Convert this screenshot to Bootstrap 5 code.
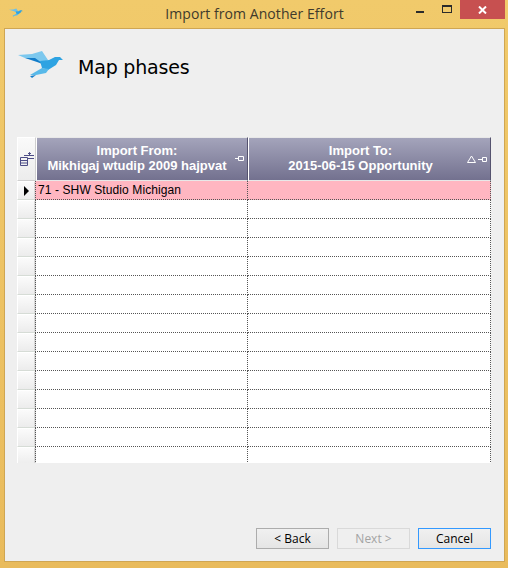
<!DOCTYPE html>
<html lang="en">
<head>
    <meta charset="UTF-8">
    <title>Import from Another Effort</title>
    <link href="https://cdn.jsdelivr.net/npm/bootstrap@5.3.0/dist/css/bootstrap.min.css" rel="stylesheet">
    <style>
        html, body { height: 568px; overflow: hidden; }
        body { background: #f0c869; }
        .app-window { height: 568px; padding: 0 3px 6px 4px; background: linear-gradient(#f1ca6b, #e9bb5c); }
        .title-bar { height: 28px; position: relative; }
        .title-icon { position: absolute; left: 5px; top: 8px; }
        .title-text { font: 14px "Open Sans", sans-serif; color: #403a2c; padding-top: 4px; line-height: 20px; letter-spacing: .07px; }
        .win-btn { position: absolute; top: 0; height: 19px; }
        .win-min { left: 412px; width: 8px; }
        .win-min::after { content: ""; position: absolute; left: 0; top: 11px; width: 8px; height: 2px; background: #2b2b2b; }
        .win-max { left: 438px; width: 10px; }
        .win-max::after { content: ""; position: absolute; left: 0; top: 5px; width: 10px; height: 8px; border: 1px solid #2b2b2b; border-top-width: 2px; }
        .win-close { left: 456px; width: 45px; background: #c75050; color: #fff; }
        .client-area { height: 534px; background: #efefef; border: 1px solid #cfa653; padding: 0 13px 12px 12px; }
        .head-row { height: 108px; padding: 21px 0 0 1px; }
        .head-title { font: 19px "DejaVu Sans", sans-serif; color: #000; margin-left: 14px; margin-top: 6px; letter-spacing: -.2px; }
        .grid-box { width: 474px; height: 326px; overflow: hidden; display: grid; grid-template-columns: 19px 212px 243px; grid-auto-rows: 19px; grid-template-rows: 44px; background: #fff; font-family: "Liberation Sans", sans-serif; }
        .corner { background: linear-gradient(#fafafa, #ececec); border: 1px solid #fff; border-right-color: #cfcfcf; border-bottom-color: #cfcfcf; padding-left: 2px; }
        .col-head { background: linear-gradient(#a4a4bb, #73718f); color: #fff; font: bold 13px/15px "Liberation Sans", sans-serif; text-align: center; padding-top: 5px; border-left: 1px solid #fff; border-right: 1px solid #55536f; border-top: 1px solid #e8e8e8; border-bottom: 1px solid #e8e8e8; position: relative; white-space: nowrap; }
        .col-from { padding-right: 10px; }
        .col-to { padding-right: 18px; }
        .pin-mark { position: absolute; right: 3px; top: 17px; }
        .row-head { background: linear-gradient(#fbfbfb, #ececec); border: 1px solid #fff; border-right: 2px solid #d8d8d8; border-bottom: 1px solid #d6dcd6; display: flex; align-items: center; justify-content: center; }
        .cell-box { border-right: 1px dotted #555; border-bottom: 1px dotted #555; border-left: 1px dotted #555; font-size: 12px; letter-spacing: .1px; line-height: 18px; color: #000; padding-left: 2px; margin-left: -1px; }
        .cell-box + .cell-box { border-left: 0; margin-left: 0; }
        .row-pink { background: #ffb6c1; }
        .wizard-btn { width: 73px; height: 21px; padding: 0; border-radius: 0; font: 12px/18px "Open Sans", sans-serif; color: #000; background: linear-gradient(#f0f0f0, #e5e5e5); border: 1px solid #acacac; }
        .wizard-btn:disabled { color: #a3a3a3; background: #efefef; border-color: #d9d9d9; opacity: 1; }
        .wizard-btn.is-default { border-color: #3399ff; }
    </style>
</head>
<body>
<div class="app-window">
    <div class="title-bar">
        <svg class="title-icon" width="14" height="9" viewBox="0 0 46 28">
            <path d="M0 5 L14 4 L24 1 L30 10 L24 13 L14 9Z" fill="#6cc0ea"/>
            <path d="M22 11 L31 10 L37 7 L42 7 L45 10 L41 10 L38 15 L30 20 L24 18Z" fill="#2ea3e2"/>
            <path d="M12 25 L24 18 L31 19 L28 23 L18 25 L14 28Z" fill="#58b9e9"/>
        </svg>
        <div class="title-text text-center">Import from Another Effort</div>
        <div class="win-btn win-min"></div>
        <div class="win-btn win-max"></div>
        <div class="win-btn win-close d-flex align-items-center justify-content-center">
            <svg width="9" height="8" viewBox="0 0 9 8"><path d="M1 0.5 L8 7.5 M8 0.5 L1 7.5" stroke="#fff" stroke-width="2"/></svg>
        </div>
    </div>
    <div class="client-area d-flex flex-column">
        <div class="head-row d-flex align-items-start">
            <svg width="46" height="28" viewBox="0 0 46 28" class="flex-shrink-0">
                <path d="M0 5 L14 4 L24 1 L30 10 L24 13 L14 9 L7 8Z" fill="#7cc8ee"/>
                <path d="M7 8 L17 8 L24 13 L30 16 L19 12Z" fill="#127cc9"/>
                <path d="M22 11 L31 10 L37 7 L42 7 L45 10 L41 10 L38 15 L30 20 L24 18Z" fill="#2ea3e2"/>
                <path d="M12 25 L24 18 L31 19 L28 23 L18 25Z" fill="#58b9e9"/>
                <path d="M12 26 L18 25 L14 28Z" fill="#127cc9"/>
            </svg>
            <div class="head-title">Map phases</div>
        </div>
        <div class="grid-box" id="phase-grid">
            <div class="corner d-flex align-items-center justify-content-center">
                <svg width="15" height="15" viewBox="0 0 15 15" fill="none" stroke="#4d4d86" class="flex-shrink-0">
                    <path d="M0.5 5.5h7v8h-7zM0.5 8.5h7M0.5 11h7M4 3.5h10M7 6.5h7M9.5 0.5v3M8 2l1.5-1.5L11 2"/>
                </svg>
            </div>
            <div class="col-head col-from">Import From:<br>Mikhigaj wtudip 2009 hajpvat
                <svg class="pin-mark" width="9" height="7" viewBox="0 0 9 7" fill="none" stroke="#fff"><path d="M0 3.5h3M3.5 1.5h5v4h-5z"/></svg>
            </div>
            <div class="col-head col-to">Import To:<br>2015-06-15 Opportunity
                <svg class="pin-mark" width="20" height="9" viewBox="0 0 20 9" fill="none" stroke="#fff"><path d="M4.5 1 L8.5 7.5 H0.5Z M11 4.5h4M15.5 2.5h4v4h-4z"/></svg>
            </div>
        </div>
    </div>
</div>
<script>
    const grid = document.getElementById("phase-grid");
    for (let i = 0; i < 15; i++) {
        const first = i === 0;
        grid.insertAdjacentHTML("beforeend", `
            <div class="row-head">${first ? '<svg width="7" height="10" viewBox="0 0 7 10"><path d="M1 0 L6 5 L1 10Z" fill="#000"/></svg>' : ''}</div>
            <div class="cell-box ${first ? 'row-pink' : ''}">${first ? '71 - SHW Studio Michigan' : ''}</div>
            <div class="cell-box ${first ? 'row-pink' : ''}"></div>`);
    }
    grid.insertAdjacentHTML("afterend", `
        <div class="d-flex justify-content-end mt-auto">
            <button type="button" class="wizard-btn me-2">&lt; Back</button>
            <button type="button" class="wizard-btn me-2" disabled>Next &gt;</button>
            <button type="button" class="wizard-btn is-default">Cancel</button>
        </div>`);
</script>
<script src="https://cdn.jsdelivr.net/npm/bootstrap@5.3.0/dist/js/bootstrap.bundle.min.js"></script>
</body>
</html>
